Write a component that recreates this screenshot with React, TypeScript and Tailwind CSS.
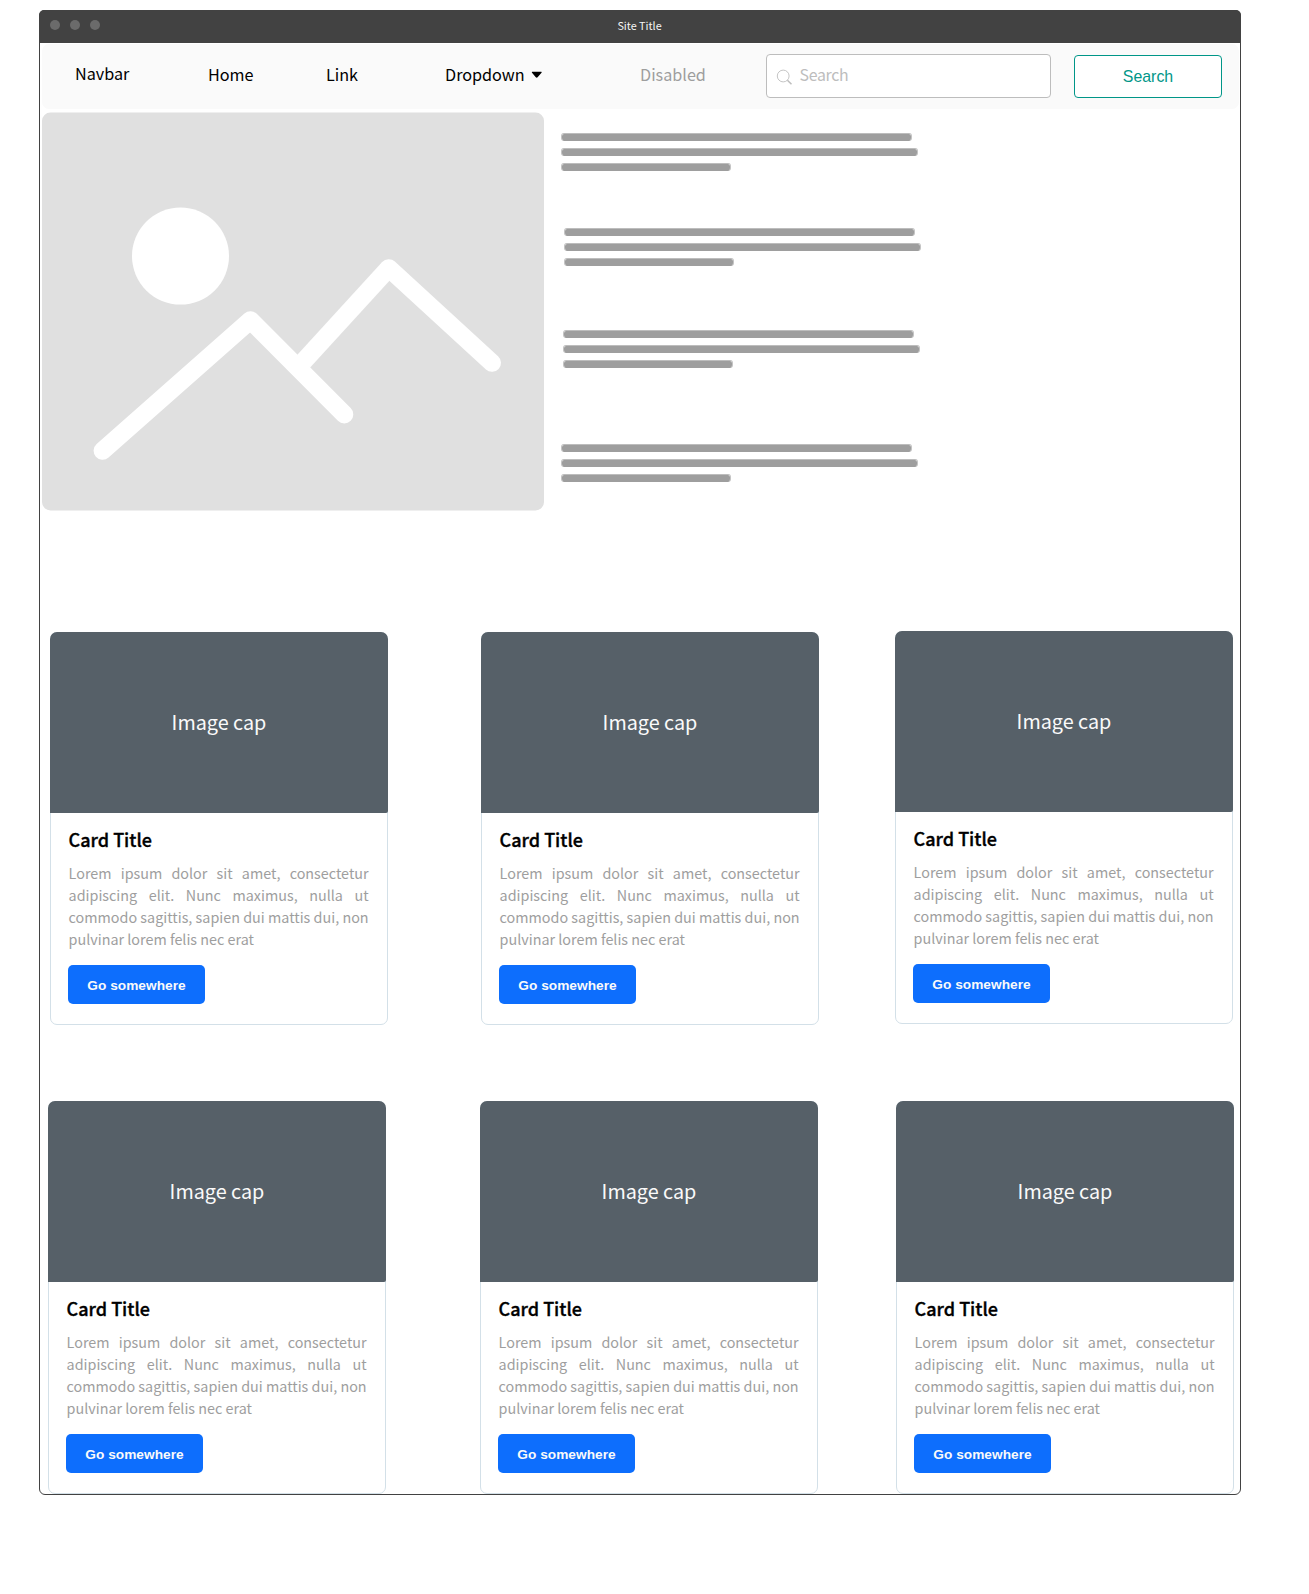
type Placement = { className: string };

const WIDE = "w-[351px]";
const WIDER = "w-[357px]";
const SHORT = "w-[170px]";

function Bar({ className }: Placement) {
  return (
    <div
      className={`h-2 rounded-[3px] border-x border-t border-x-[#c4c4c4] border-t-[#bdbdbd] bg-[#9e9e9e] bg-clip-padding ${className}`}
    />
  );
}

function TextBlock({ className }: Placement) {
  return (
    <div className={`flex flex-col gap-[7px] ${className}`}>
      <Bar className={WIDE} />
      <Bar className={WIDER} />
      <Bar className={SHORT} />
    </div>
  );
}

function ImagePlaceholder() {
  return (
    <svg width="502" height="399" viewBox="0 0 502 399" className="block shrink-0">
      <rect x="0" y="0.4" width="502" height="398.2" rx="8.5" fill="#e0e0e0" />
      <circle cx="138.5" cy="144.1" r="48.5" fill="#fff" />
      <g fill="none" stroke="#fff" strokeWidth="18" strokeLinecap="round" strokeLinejoin="round">
        <path d="M60.6 338.8 208.4 208.2 302.3 302.4" />
        <path d="M346.8 156.2 450 250.8" />
        <path d="M346.8 156.2 261.3 249.6" strokeLinecap="butt" />
      </g>
    </svg>
  );
}

function Card({ className }: Placement) {
  return (
    <article
      className={`h-[393px] w-[338px] shrink-0 rounded-[7px] border border-[#d3e0e8] bg-white ${className}`}
    >
      <div className="-mx-px -mt-px flex h-[181px] items-center justify-center rounded-t-[7px] rounded-br-[2px] bg-[#566068] pb-px text-[19.8px] leading-6 text-[#fafafa]">
        Image cap
      </div>
      <div className="pl-[17px]">
        <h2 className="mt-[13px] pl-[0.6px] text-[18px] leading-[26px] font-medium text-black [-webkit-text-stroke:0.35px_#000]">
          Card Title
        </h2>
        <p className="mt-[10px] ml-[0.6px] w-[300px] text-justify text-[14.35px] leading-[22px] text-[#9e9e9e]">
          Lorem ipsum dolor sit amet, consectetur adipiscing elit. Nunc maximus, nulla ut commodo
          sagittis, sapien dui mattis dui, non pulvinar lorem felis nec erat
        </p>
        <button className="mt-[15px] block h-[39px] w-[137px] rounded-[5px] bg-[#0d6efd] pt-[3px] font-['Liberation_Sans',sans-serif] text-[13.67px] font-bold tracking-[0.04px] text-[#fafafa]">
          Go somewhere
        </button>
      </div>
    </article>
  );
}

function Navbar() {
  return (
    <nav className="mt-px mr-px ml-[2px] flex h-[65px] items-start rounded-[7px] bg-[#fafafa] text-[16.2px] leading-6 text-black">
      <span className="mt-[17px] ml-[33px] w-[133px]">Navbar</span>
      <span className="mt-[18px] w-[118px]">Home</span>
      <span className="mt-[18px] w-[119px]">Link</span>
      <span className="mt-[18px] flex w-[195px] items-start">
        Dropdown
        <svg width="12" height="8" viewBox="0 0 12 8" className="mt-[9px] ml-[6px]">
          <path d="M1.3 0.8h8.9q1 0.1 0.3 1L6.6 6.3q-0.9 0.8-1.8 0L1 1.8q-0.6-0.9 0.3-1Z" fill="#000" />
        </svg>
      </span>
      <span className="mt-[18px] w-[126px] text-[#9e9e9e]">Disabled</span>
      <div className="mt-[10px] flex h-11 w-[285px] items-start rounded-[4px] border border-[#bdbdbd] bg-white">
        <svg
          width="18"
          height="18"
          viewBox="0 0 18 18"
          fill="none"
          stroke="#bdbdbd"
          className="mt-[13px] ml-[9px]"
        >
          <circle cx="7.2" cy="8" r="5.9" strokeWidth="0.9" />
          <path d="M11.4 12.2 15.5 16.2" strokeWidth="1.5" />
        </svg>
        <span className="mt-[8px] ml-[5.5px] text-[15.9px] tracking-[-0.3px] text-[#bdbdbd]">Search</span>
      </div>
      <button className="mt-[11px] ml-[23px] h-[43px] w-[148px] rounded-[4px] border border-[#009688] bg-white pt-px font-['Liberation_Sans',sans-serif] text-[15.9px] text-[#009688]">
        Search
      </button>
    </nav>
  );
}

export default function App() {
  return (
    <div className="h-[1594px] w-[1309px] overflow-hidden bg-white pt-[10px] pl-[39px] font-['Noto_Sans_CJK_SC',sans-serif]">
      <main className="h-[1485px] w-[1202px] rounded-[6px] border border-[#424242] bg-white">
        <header className="-mx-px -mt-px flex h-[33px] items-start rounded-t-[5px] bg-[#424242]">
          <div className="mt-[10px] ml-[11.4px] flex w-[567px] gap-[10px]">
            <i className="size-[10px] rounded-full bg-[#6b6b6b]" />
            <i className="size-[10px] rounded-full bg-[#6b6b6b]" />
            <i className="size-[10px] rounded-full bg-[#6b6b6b]" />
          </div>
          <span className="mt-[7px] text-[10.8px] leading-4 text-[#f5f5f5]">Site Title</span>
        </header>

        <Navbar />

        <section className="mt-[3px] ml-[2px] flex h-[399px] items-start">
          <ImagePlaceholder />
          <div className="pt-[21px] pl-[17px]">
            <TextBlock className="" />
            <TextBlock className="mt-[57px] ml-[3px]" />
            <TextBlock className="mt-16 ml-[2px]" />
            <TextBlock className="mt-[76px]" />
          </div>
        </section>

        <section className="mt-[121px] ml-[10px] flex items-start">
          <Card className="" />
          <Card className="ml-[93px]" />
          <Card className="-mt-px ml-[76px]" />
        </section>

        <section className="mt-[76px] ml-2 flex items-start">
          <Card className="" />
          <Card className="ml-[94px]" />
          <Card className="ml-[78px]" />
        </section>
      </main>
    </div>
  );
}
